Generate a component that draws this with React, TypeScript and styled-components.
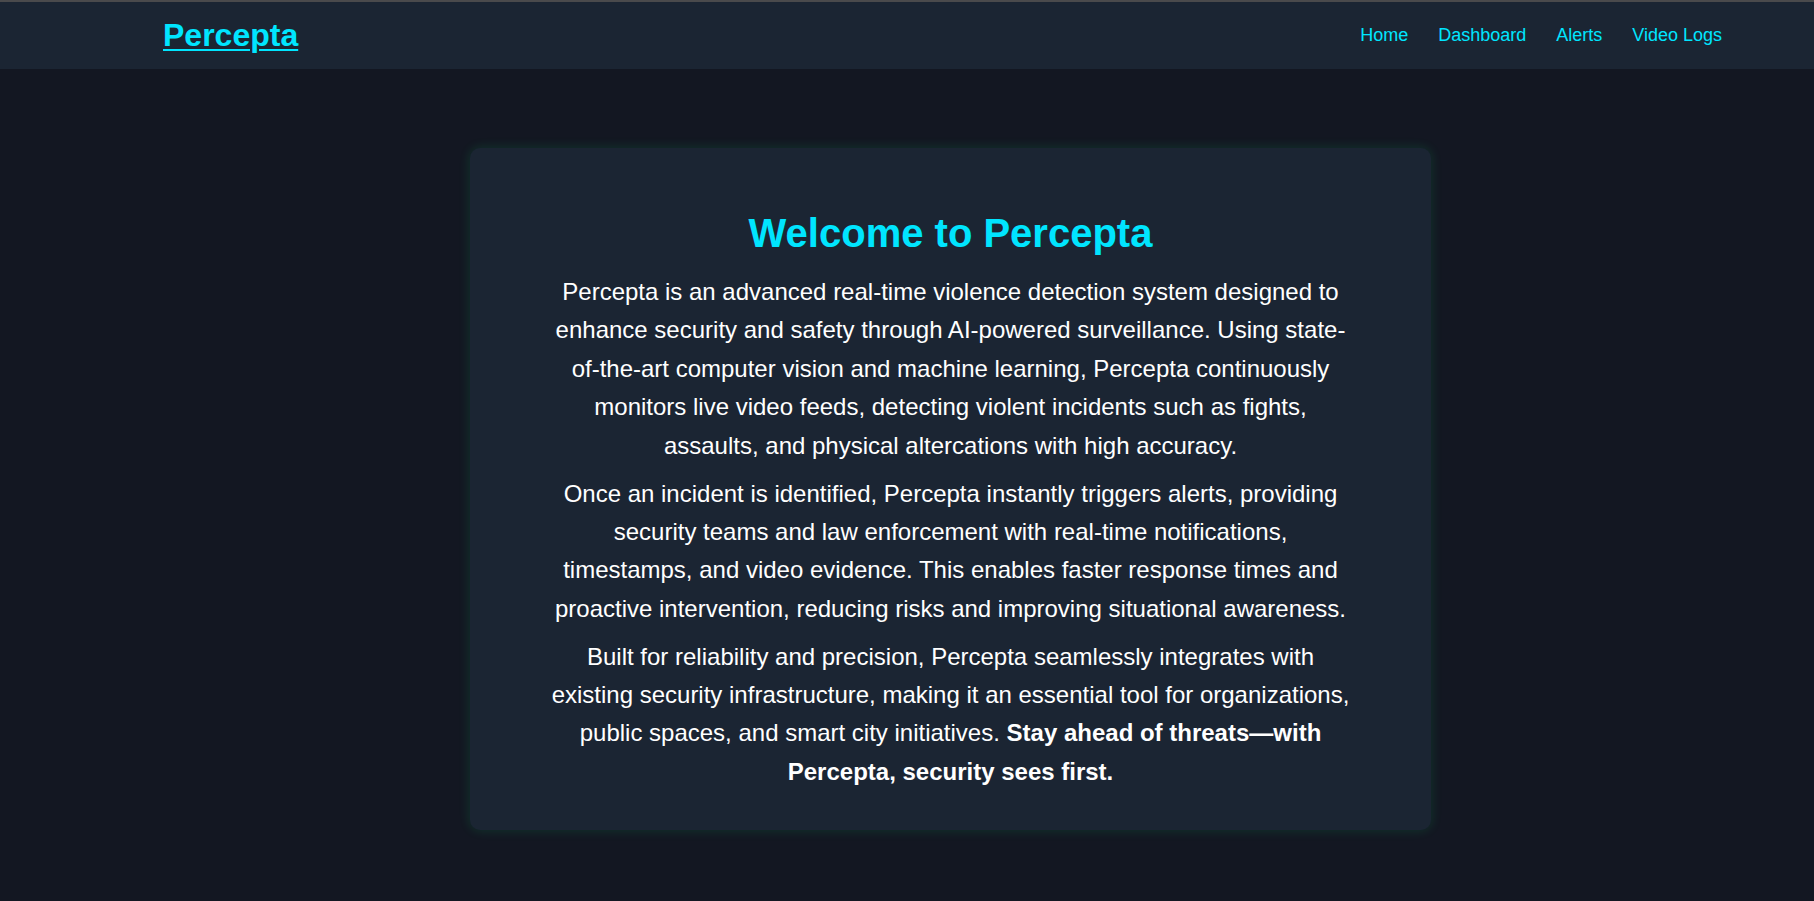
import React from "react";
import styled, { createGlobalStyle } from "styled-components";

const GlobalStyle = createGlobalStyle`
  html, body {
    margin: 0;
    padding: 0;
    background: #131722;
    font-family: "Liberation Sans", Arial, Helvetica, sans-serif;
  }
  * { box-sizing: border-box; }
`;

const Page = styled.div`
  min-height: 100vh;
  background: #131722;
  border-top: 2px solid #4a4a4c;
`;

const NavBar = styled.nav`
  display: flex;
  align-items: center;
  justify-content: space-between;
  height: 67px;
  padding: 0 92px 0 163px;
  background: #1b2533;
`;

const Logo = styled.a`
  font-size: 32px;
  font-weight: 700;
  color: #00e5ff;
  text-decoration: underline;
  text-decoration-thickness: 2px;
  text-underline-offset: 3px;
  line-height: normal;
`;

const NavLinks = styled.div`
  display: flex;
  align-items: center;
  gap: 30px;
`;

const NavLink = styled.a`
  font-size: 18px;
  color: #00e5ff;
  text-decoration: none;
  line-height: normal;
`;

const Main = styled.main`
  display: flex;
  justify-content: center;
  padding: 79px 0 60px 87px;
`;

const Card = styled.section`
  width: 961px;
  padding: 63px 80px 39px;
  background: #1b2533;
  border-radius: 10px;
  box-shadow: 0 0 12px rgba(0, 255, 110, 0.14);
  text-align: center;
  color: #ffffff;
`;

const Title = styled.h1`
  margin: 0 0 17px;
  font-size: 40px;
  font-weight: 700;
  color: #00e5ff;
  line-height: normal;
`;

const Paragraph = styled.p`
  margin: 0 0 9.6px;
  font-size: 24px;
  line-height: 1.6;
  &:last-child {
    margin-bottom: 0;
  }
`;

const Strong = styled.strong`
  font-weight: 700;
`;

export default function App() {
  return (
    <>
      <GlobalStyle />
      <Page>
        <NavBar>
          <Logo href="#">Percepta</Logo>
          <NavLinks>
            <NavLink href="#">Home</NavLink>
            <NavLink href="#">Dashboard</NavLink>
            <NavLink href="#">Alerts</NavLink>
            <NavLink href="#">Video Logs</NavLink>
          </NavLinks>
        </NavBar>
        <Main>
          <Card>
            <Title>Welcome to Percepta</Title>
            <Paragraph>
              Percepta is an advanced real-time violence detection system designed to enhance
              security and safety through AI-powered surveillance. Using state-of-the-art computer
              vision and machine learning, Percepta continuously monitors live video feeds,
              detecting violent incidents such as fights, assaults, and physical altercations with
              high accuracy.
            </Paragraph>
            <Paragraph>
              Once an incident is identified, Percepta instantly triggers alerts, providing security
              teams and law enforcement with real-time notifications, timestamps, and video
              evidence. This enables faster response times and proactive intervention, reducing
              risks and improving situational awareness.
            </Paragraph>
            <Paragraph>
              Built for reliability and precision, Percepta seamlessly integrates with existing
              security infrastructure, making it an essential tool for organizations, public
              spaces, and smart city initiatives.{" "}
              <Strong>Stay ahead of threats—with Percepta, security sees first.</Strong>
            </Paragraph>
          </Card>
        </Main>
      </Page>
    </>
  );
}
